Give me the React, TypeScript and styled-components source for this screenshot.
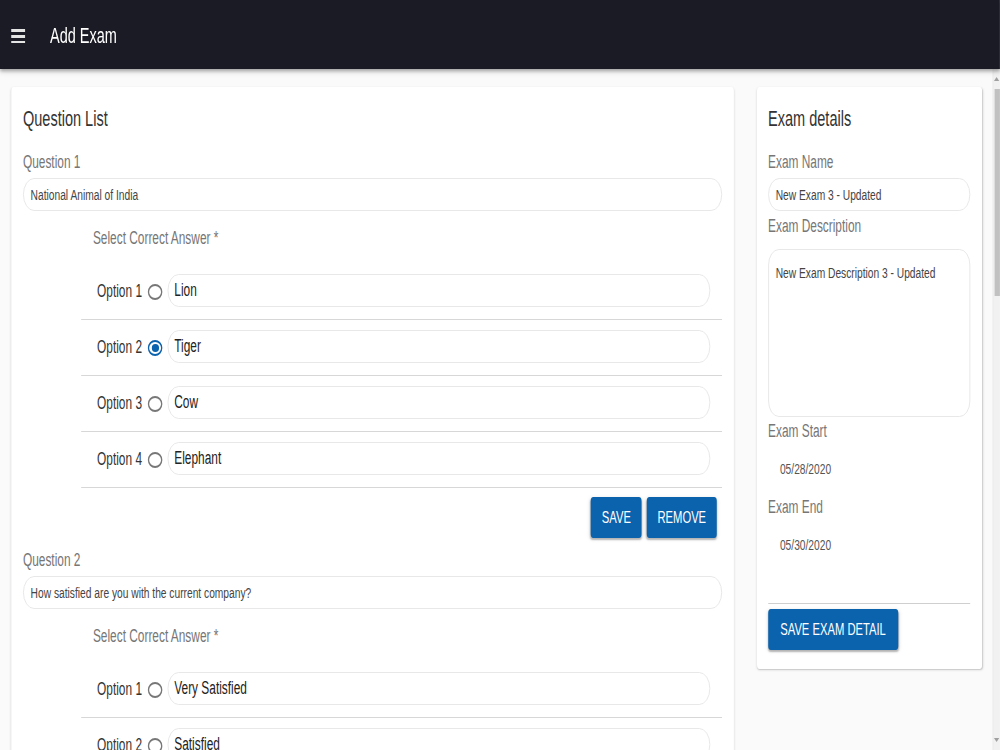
import React from "react";
import styled, { createGlobalStyle, css } from "styled-components";

const GlobalStyle = createGlobalStyle`
  *, *::before, *::after { box-sizing: border-box; }
  html, body {
    margin: 0;
    padding: 0;
    overflow: hidden;
    background: #fafafa;
  }
  body {
    font-family: "Liberation Sans", Arial, sans-serif;
  }
  #root { width: 1000px; height: 750px; overflow: hidden; }
`;

/* The reference is a horizontally squeezed capture: the page is laid out at
   1515px and squeezed to the 1000px window. */
const Stage = styled.div`
  width: 1515px;
  height: 750px;
  transform: scaleX(0.66);
  transform-origin: 0 0;
  display: flex;
  flex-direction: column;
  background: #fafafa;
`;

const Header = styled.header`
  height: 69px;
  flex-shrink: 0;
  display: flex;
  align-items: center;
  padding-left: 16.7px;
  background: #1b1b25;
  box-shadow: 0 2px 4px rgba(0, 0, 0, 0.28), 0 4px 6px rgba(0, 0, 0, 0.1);
  position: relative;
  z-index: 2;
`;

const Hamburger = styled.div`
  width: 21px;
  display: flex;
  flex-direction: column;
  gap: 2.9px;
  margin-top: 3.6px;
  margin-right: 38px;
`;

const Bar = styled.span`
  display: block;
  height: 2.7px;
  background: #e4e4e4;
`;

const HeaderTitle = styled.h1`
  margin: 2px 0 0;
  font-size: 22px;
  line-height: 28px;
  font-weight: 400;
  color: #ffffff;
`;

const Body = styled.div`
  flex: 1;
  display: flex;
  min-height: 0;
`;

const Main = styled.main`
  flex: 1;
  display: flex;
  align-items: flex-start;
  gap: 35px;
  padding: 18px 16.4px 0 16.7px;
  overflow: hidden;
`;

const Card = styled.section`
  background: #ffffff;
  border-radius: 4px;
  box-shadow: 0 1px 3px rgba(0, 0, 0, 0.16), 0 1px 1px rgba(0, 0, 0, 0.08);
`;

const QuestionCard = styled(Card)`
  flex: 1;
  padding: 18px 18px 40px 18.1px;
`;

const DetailsCard = styled(Card)`
  width: 341px;
  flex-shrink: 0;
  padding: 18px 18.3px 19px 16.7px;
`;

const CardTitle = styled.h2`
  margin: 0;
  font-size: 22px;
  line-height: 28px;
  font-weight: 400;
  color: #333333;
`;

const FieldLabel = styled.div<{ $mt?: number; $ml?: number }>`
  margin-top: ${(p) => p.$mt ?? 0}px;
  margin-left: ${(p) => p.$ml ?? 0}px;
  font-size: 18px;
  line-height: 24px;
  color: #767676;
`;

const fieldBase = css`
  display: block;
  width: 100%;
  border: 1px solid #e3e3e3;
  background: #ffffff;
  font-family: "Liberation Sans", Arial, sans-serif;
  outline: none;
`;

const PillInput = styled.input`
  ${fieldBase};
  height: 33px;
  margin-top: 4px;
  border-radius: 16.5px;
  padding: 0 0 0 10.6px;
  font-size: 15.5px;
  color: #444444;
`;

const TextArea = styled.textarea`
  ${fieldBase};
  height: 168px;
  margin-top: 11.5px;
  border-radius: 16px;
  padding: 13px 10.6px;
  font-size: 15.5px;
  line-height: 20px;
  color: #444444;
  resize: none;
`;

const OptionList = styled.div`
  margin-left: 88px;
  margin-top: 14.5px;
`;

const OptionRow = styled.div`
  display: flex;
  align-items: center;
  padding: 10px 18px 12px 24.3px;
  border-bottom: 1px solid #d7d7d7;
`;

const OptionLabel = styled.span`
  width: 77px;
  flex-shrink: 0;
  font-size: 18px;
  line-height: 24px;
  color: #333333;
`;

const Radio = styled.span<{ $checked?: boolean }>`
  width: 22px;
  height: 16px;
  flex-shrink: 0;
  margin-right: 8px;
  margin-top: 2px;
  border-radius: 50%;
  border: 2px solid ${(p) => (p.$checked ? "#0b62ad" : "#777777")};
  display: flex;
  align-items: center;
  justify-content: center;
  &::after {
    content: "";
    display: ${(p) => (p.$checked ? "block" : "none")};
    width: 11px;
    height: 8px;
    border-radius: 50%;
    background: #0b62ad;
  }
`;

const OptionInput = styled.input`
  ${fieldBase};
  flex: 1;
  height: 33px;
  border-radius: 16.5px;
  padding: 0 0 0 9px;
  font-size: 18px;
  color: #222222;
`;

const ButtonRow = styled.div`
  display: flex;
  justify-content: flex-end;
  gap: 7.6px;
  margin-top: 9px;
  padding-right: 8px;
`;

const ActionButton = styled.button<{ $w: number; $mt?: number }>`
  width: ${(p) => p.$w}px;
  height: 41px;
  margin-top: ${(p) => p.$mt ?? 0}px;
  padding: 0;
  border: none;
  border-radius: 4px;
  background: #0b62ad;
  color: #ffffff;
  font-family: "Liberation Sans", Arial, sans-serif;
  font-size: 17px;
  text-transform: uppercase;
  box-shadow: 0 2px 2px rgba(0, 0, 0, 0.24), 0 1px 5px rgba(0, 0, 0, 0.12);
  cursor: pointer;
`;

const DateValue = styled.div`
  padding: 16px 0 16px 18px;
  font-size: 15.5px;
  line-height: 20px;
  color: #555555;
`;

const Divider = styled.hr`
  margin: 32px 0 0;
  border: none;
  height: 1px;
  background: #cfcfcf;
`;

const Scrollbar = styled.div`
  width: 10.6px;
  flex-shrink: 0;
  display: flex;
  flex-direction: column;
  align-items: stretch;
  background: #f1f1f1;
  border-left: 1px solid #e9e9e9;
`;

const ScrollArrow = styled.div<{ $down?: boolean }>`
  height: 18px;
  display: flex;
  justify-content: center;
  align-items: ${(p) => (p.$down ? "flex-end" : "flex-start")};
  padding: ${(p) => (p.$down ? "0 0 8px" : "8px 0 0")};
  &::before {
    content: "";
    width: 0;
    height: 0;
    border-left: 4px solid transparent;
    border-right: 4px solid transparent;
    ${(p) =>
      p.$down
        ? "border-top: 4px solid #a0a0a0;"
        : "border-bottom: 4px solid #a0a0a0;"}
  }
`;

const Thumb = styled.div`
  height: 207px;
  margin: 2px 0 0 2px;
  background: #c1c1c1;
`;

const Spacer = styled.div`
  flex: 1;
`;

type Question = {
  title: string;
  text: string;
  options: string[];
  correct: number;
  actions?: boolean;
};

const questions: Question[] = [
  {
    title: "Question 1",
    text: "National Animal of India",
    options: ["Lion", "Tiger", "Cow", "Elephant"],
    correct: 1,
    actions: true,
  },
  {
    title: "Question 2",
    text: "How satisfied are you with the current company?",
    options: ["Very Satisfied", "Satisfied", "Neutral", "Dissatisfied"],
    correct: -1,
    actions: true,
  },
];

function QuestionBlock({ q, first }: { q: Question; first: boolean }) {
  return (
    <div>
      <FieldLabel $mt={first ? 17 : 10}>{q.title}</FieldLabel>
      <PillInput readOnly defaultValue={q.text} />
      <FieldLabel $mt={14.5} $ml={106}>
        Select Correct Answer *
      </FieldLabel>
      <OptionList>
        {q.options.map((o, i) => (
          <OptionRow key={o}>
            <OptionLabel>Option {i + 1}</OptionLabel>
            <Radio $checked={i === q.correct} />
            <OptionInput readOnly defaultValue={o} />
          </OptionRow>
        ))}
      </OptionList>
      {q.actions && (
        <ButtonRow>
          <ActionButton $w={77}>Save</ActionButton>
          <ActionButton $w={106}>Remove</ActionButton>
        </ButtonRow>
      )}
    </div>
  );
}

export default function App() {
  return (
    <>
      <GlobalStyle />
      <Stage>
        <Header>
          <Hamburger>
            <Bar />
            <Bar />
            <Bar />
          </Hamburger>
          <HeaderTitle>Add Exam</HeaderTitle>
        </Header>
        <Body>
          <Main>
            <QuestionCard>
              <CardTitle>Question List</CardTitle>
              {questions.map((q, i) => (
                <QuestionBlock key={q.title} q={q} first={i === 0} />
              ))}
            </QuestionCard>
            <DetailsCard>
              <CardTitle>Exam details</CardTitle>
              <FieldLabel $mt={17}>Exam Name</FieldLabel>
              <PillInput readOnly defaultValue="New Exam 3 - Updated" />
              <FieldLabel $mt={2.5}>Exam Description</FieldLabel>
              <TextArea readOnly defaultValue="New Exam Description 3 - Updated" />
              <FieldLabel $mt={2}>Exam Start</FieldLabel>
              <DateValue>05/28/2020</DateValue>
              <FieldLabel>Exam End</FieldLabel>
              <DateValue>05/30/2020</DateValue>
              <Divider />
              <ActionButton $w={197} $mt={5}>
                Save Exam Detail
              </ActionButton>
            </DetailsCard>
          </Main>
          <Scrollbar>
            <ScrollArrow />
            <Thumb />
            <Spacer />
            <ScrollArrow $down />
          </Scrollbar>
        </Body>
      </Stage>
    </>
  );
}
